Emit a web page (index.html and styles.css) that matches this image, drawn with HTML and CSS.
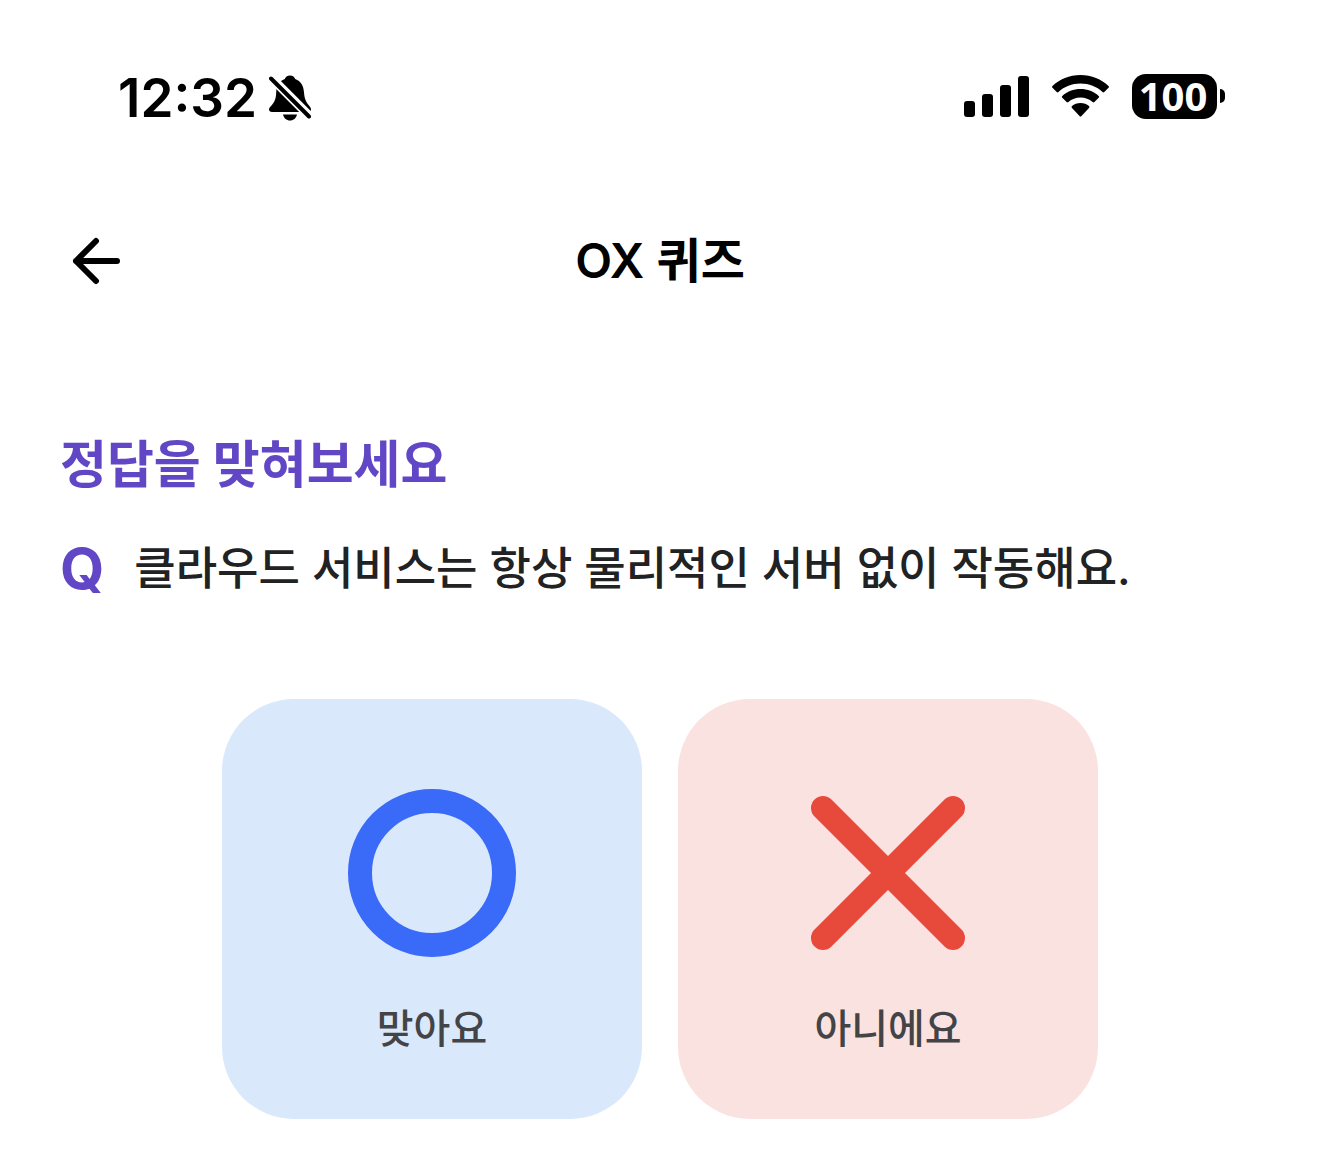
FILE: index.html
```
<!DOCTYPE html>
<html lang="ko">
<head>
  <meta charset="UTF-8" />
  <meta name="viewport" content="width=device-width, initial-scale=1" />
  <title>OX 퀴즈</title>
  <link rel="stylesheet" href="styles.css">
</head>
<body>
  <!-- Status bar -->
  <div class="status-bar">
    <div class="status-left">
      <span class="time">12:32</span>
      <svg class="bell" width="44" height="48" viewBox="0 0 44 48" aria-hidden="true">
        <path d="M21 1.500c-2.800 0-4.600 1.600-5.200 3.600C10 7.200 7.500 12 7.200 18.500 7 25 5.500 28 2.700 31.200 1 33 0 34 0 35.300c0 1.700 1.200 2.700 3 2.700h36c1.800 0 3-1 3-2.700 0-1.300-.7-2.300-2.200-4.100C37 28 35.500 25 35 18.500 34.500 12 32 7.200 26.200 5.100 25.600 3.100 23.800 1.500 21 1.500z"/>
        <path d="M14 40.500h14c-.8 3.700-3.500 6-7 6s-6.200-2.300-7-6z"/>
        <path class="gap" d="M0 1.500l44 44"/>
        <path class="slash" d="M2 4.500l38 38"/>
      </svg>
    </div>
    <div class="status-right">
      <svg width="65" height="46" viewBox="0 0 65 46" aria-hidden="true">
        <rect x="0" y="28" width="11" height="16" rx="3"/>
        <rect x="18" y="21" width="11" height="23" rx="3"/>
        <rect x="36" y="12" width="11" height="32" rx="3"/>
        <rect x="54" y="3" width="11" height="41" rx="3"/>
      </svg>
      <svg class="wifi" width="57" height="46" viewBox="0 0 57 46" aria-hidden="true">
        <path d="M28.500 2C17.500 2 7.500 6.200.5 13c-.6.6-.6 1.200 0 1.800l4.200 4.200c.6.6 1.200.6 1.800 0C12.300 13.700 20 10.600 28.500 10.600S44.700 13.700 50.500 19c.6.600 1.200.6 1.800 0l4.200-4.200c.6-.6.6-1.200 0-1.800C49.500 6.200 39.500 2 28.500 2z"/>
        <path d="M28.500 16c-7 0-13.300 2.600-18.200 6.900-.6.600-.6 1.200 0 1.800l4.300 4.300c.6.6 1.200.6 1.800.1 3.300-2.800 7.500-4.500 12.100-4.500s8.800 1.700 12.100 4.500c.6.5 1.200.5 1.800-.1l4.300-4.300c.6-.6.6-1.200 0-1.800C41.800 18.600 35.500 16 28.500 16z"/>
        <path d="M28.500 30c-3.300 0-6.300 1.200-8.500 3.100-.6.500-.6 1.200 0 1.800l7.500 8c.7.700 1.300.7 2 0l7.500-8c.6-.6.6-1.300 0-1.800-2.200-1.900-5.200-3.100-8.500-3.100z"/>
      </svg>
      <div class="battery">
        <span class="battery-level">100</span>
        <span class="battery-tip"></span>
      </div>
    </div>
  </div>

  <!-- Header -->
  <header class="header">
    <button class="back-btn" type="button" aria-label="뒤로">
      <svg width="48" height="48" viewBox="0 0 48 48" aria-hidden="true">
        <path d="M24 4L4 24l20 20M4 24h41"/>
      </svg>
    </button>
    <h1>OX 퀴즈</h1>
  </header>

  <!-- Quiz -->
  <main class="quiz">
    <h2>정답을 맞혀보세요</h2>
    <div class="question">
      <span class="q-mark">Q</span>
      <p>클라우드 서비스는 항상 물리적인 서버 없이 작동해요.</p>
    </div>
    <div class="answers">
      <button class="answer answer-o" type="button">
        <svg width="168" height="168" viewBox="0 0 168 168" aria-hidden="true">
          <circle cx="84" cy="84" r="72"/>
        </svg>
        <span>맞아요</span>
      </button>
      <button class="answer answer-x" type="button">
        <svg width="168" height="168" viewBox="0 0 168 168" aria-hidden="true">
          <path d="M19 19l130 130M149 19L19 149"/>
        </svg>
        <span>아니에요</span>
      </button>
    </div>
  </main>
</body>
</html>
```
FILE: styles.css
```
:root {
  --purple: #6147c5;
  --text: #212223;
  --label: #444446;
  --blue: #3a6af8;
  --light-blue: #dae8fc;
  --red: #e74a3b;
  --light-red: #fae2e1;
}
* {
  box-sizing: border-box;
  margin: 0;
  padding: 0;
}
body {
  background: #fff;
  color: #000;
  font-family: Inter, "Noto Sans CJK KR", sans-serif;
}
svg { display: block; }
button {
  border: none;
  background: none;
  font-family: inherit;
  cursor: pointer;
}

/* Status bar */
.status-bar {
  display: flex;
  justify-content: space-between;
  align-items: center;
  padding: 64px 95px 64px 118px;
}
.status-left,
.status-right {
  display: flex;
  align-items: center;
}
.status-left { gap: 12px; }
.status-right {
  gap: 23px;
  padding-bottom: 4px;
}
.time {
  font-size: 53px;
  font-weight: 600;
  line-height: 68px;
}
.bell .gap {
  fill: none;
  stroke: #fff;
  stroke-width: 9;
}
.bell .slash {
  fill: none;
  stroke: #000;
  stroke-width: 4;
  stroke-linecap: round;
}
.battery {
  display: flex;
  align-items: center;
  gap: 3px;
}
.battery-level {
  width: 85px;
  height: 45px;
  padding-right: 3px;
  border-radius: 14px;
  background: #000;
  color: #fff;
  font-family: "Noto Sans", sans-serif;
  font-size: 40px;
  font-weight: 700;
  line-height: 43px;
  text-align: center;
}
.battery-tip {
  width: 5px;
  height: 14px;
  border-radius: 0 6px 6px 0;
  background: #000;
}

/* Header */
.header {
  display: grid;
  grid-template-columns: 1fr auto 1fr;
  align-items: center;
  padding: 29px 72px;
}
.back-btn {
  justify-self: start;
}
.back-btn path {
  fill: none;
  stroke: #000;
  stroke-width: 6;
  stroke-linecap: round;
  stroke-linejoin: round;
}
h1 {
  font-size: 48px;
  font-weight: 600;
  line-height: 72px;
}

/* Quiz */
.quiz {
  padding: 103px 60px 42px;
}
h2 {
  color: var(--purple);
  font-size: 51px;
  font-weight: 700;
  line-height: 72px;
}
.question {
  display: flex;
  align-items: center;
  gap: 30px;
  margin-top: 32px;
}
.q-mark {
  color: var(--purple);
  font-size: 57px;
  font-weight: 700;
  line-height: 72px;
}
.question p {
  color: var(--text);
  font-size: 45px;
  font-weight: 500;
  line-height: 72px;
}
.answers {
  display: flex;
  justify-content: center;
  flex-wrap: wrap;
  gap: 36px;
  margin-top: 94px;
}
.answer {
  display: flex;
  flex-direction: column;
  align-items: center;
  gap: 42px;
  width: 420px;
  padding: 90px 24px 60px;
  border-radius: 72px;
  color: var(--label);
  font-size: 40px;
  font-weight: 500;
  line-height: 60px;
}
.answer svg {
  fill: none;
  stroke-linecap: round;
}
.answer-o { background: var(--light-blue); }
.answer-o svg {
  stroke: var(--blue);
  stroke-width: 24;
}
.answer-x { background: var(--light-red); }
.answer-x svg {
  stroke: var(--red);
  stroke-width: 24;
}
```
